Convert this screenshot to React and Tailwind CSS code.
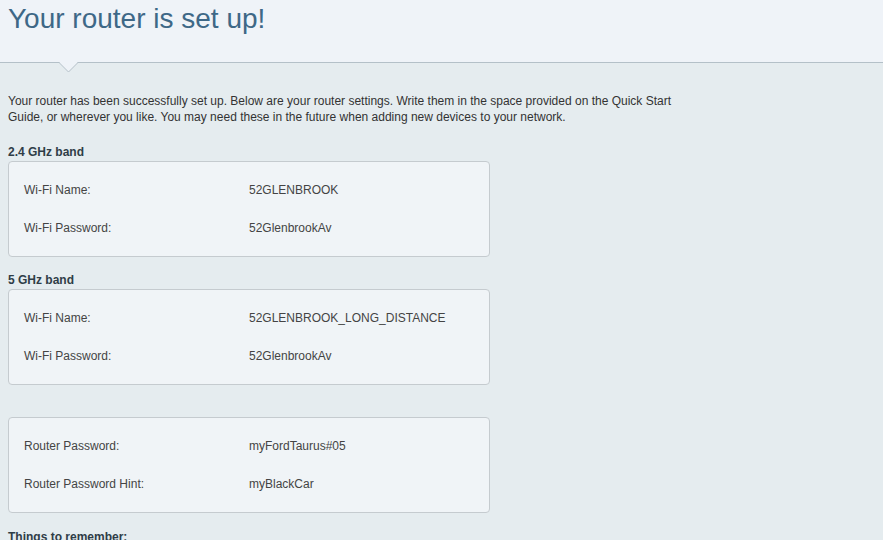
export default function App() {
  const font = { fontFamily: '"Liberation Sans", Arial, sans-serif' };
  const Row = ({ label, value }) => (
    <div className="flex h-[38px] items-center">
      <div className="w-[225px] shrink-0">{label}</div>
      <div>{value}</div>
    </div>
  );
  const Section = ({ title, rows }) => (
    <div className="mt-[15px] first:mt-0">
      <div className="h-[16px] text-[12px] font-bold leading-[16px] text-[#2f3d47]">{title || "\u00a0"}</div>
      <div className="mt-[1px] w-[482px] rounded-[4px] border border-[#c5cbcf] bg-[#f0f4f7] px-[15px] py-[9px] text-[12px] text-[#444]">
        {rows.map((r) => (
          <Row key={r[0]} label={r[0]} value={r[1]} />
        ))}
      </div>
    </div>
  );
  return (
    <div className="min-h-[540px] bg-[#e5ecef]" style={font}>
      <div className="relative h-[63px] border-b border-[#b4c0c8] bg-[#eff3f8] pl-[8px] pt-[3px]">
        <h1 className="text-[28px] leading-[32px] text-[#3e6887]">Your router is set up!</h1>
        <svg className="absolute left-[59px] top-[62px]" width="19" height="11" viewBox="0 0 19 11">
          <path d="M0 0.5 L9.5 10 L19 0.5" fill="#eff3f8" stroke="#b4c0c8" strokeWidth="1" />
          <rect x="1" y="0" width="17" height="1" fill="#eff3f8" />
        </svg>
      </div>
      <div className="px-[8px] pt-[30px]">
        <p className="w-[690px] text-[12px] leading-[16px] text-[#333]">
          Your router has been successfully set up. Below are your router settings. Write them in the space provided on the Quick Start Guide, or wherever you like. You may need these in the future when adding new devices to your network.
        </p>
        <div className="mt-[19px]">
          <Section title="2.4 GHz band" rows={[["Wi-Fi Name:", "52GLENBROOK"], ["Wi-Fi Password:", "52GlenbrookAv"]]} />
          <Section title="5 GHz band" rows={[["Wi-Fi Name:", "52GLENBROOK_LONG_DISTANCE"], ["Wi-Fi Password:", "52GlenbrookAv"]]} />
          <Section title="" rows={[["Router Password:", "myFordTaurus#05"], ["Router Password Hint:", "myBlackCar"]]} />
          <div className="mt-[16px] h-[16px] text-[12px] font-bold leading-[16px] text-[#2f3d47]">Things to remember:</div>
        </div>
      </div>
    </div>
  );
}
